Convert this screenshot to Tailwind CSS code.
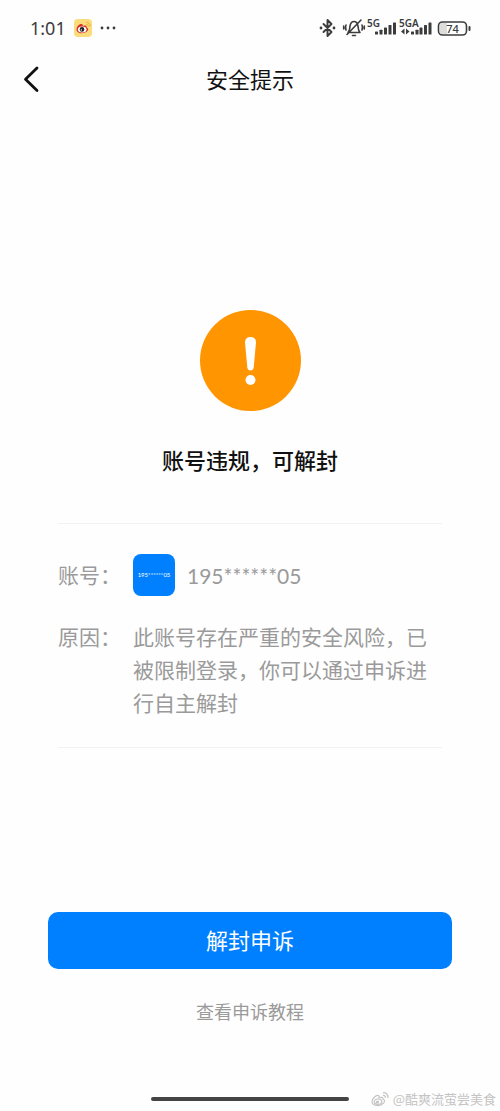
<!DOCTYPE html>
<html lang="zh-CN">
<head>
<meta charset="utf-8">
<meta name="viewport" content="width=device-width, initial-scale=1">
<title>安全提示</title>
<script src="https://cdn.jsdelivr.net/npm/@tailwindcss/browser@4"></script>
</head>
<body class="relative flex min-h-screen flex-col bg-[#fefefe] font-['Noto_Sans_CJK_SC',sans-serif] text-[#111111]">
  <div class="flex h-14 items-center justify-between pr-7 pl-[30px] text-[#3c3c3c]">
    <div class="flex items-center gap-2">
      <span class="font-['Noto_Sans',sans-serif] text-lg leading-6">1:01</span>
      <svg class="size-[18px]" viewBox="0 0 18 18" aria-hidden="true">
        <rect width="18" height="18" rx="4" fill="#fbdc7c"/>
        <path d="M2.500 10.500C2.500 7.500 5.500 4.500 8 5.200C9 5.400 9 6.400 8.800 6.900C11 6 13 6.500 12.700 8.400C14.300 9 14.500 10.300 13.800 11.400C11 15.500 2.500 15 2.500 10.500Z" fill="#d8342c"/>
        <ellipse cx="8.200" cy="10.500" rx="4.300" ry="2.900" fill="#fff"/>
        <circle cx="8" cy="10.400" r="2.300" fill="#222"/>
        <circle cx="7.300" cy="10.900" r=".7" fill="#fff"/>
        <path d="M12.200 5.300c1.400-.2 2.400.8 2.100 2.200M12 3.300c2.700-.4 4.500 1.700 4 4.300" fill="none" stroke="#f0b04a" stroke-width="1"/>
      </svg>
      <svg class="h-1 w-4" viewBox="0 0 16 4" fill="currentColor" aria-hidden="true"><circle cx="2" cy="2" r="1.400"/><circle cx="8" cy="2" r="1.400"/><circle cx="14" cy="2" r="1.400"/></svg>
    </div>
    <svg class="h-6 w-[153px]" viewBox="0 0 153 24" fill="none" stroke="currentColor" stroke-linecap="round" stroke-linejoin="round" role="img" aria-label="蓝牙 静音 5G 5GA 74">
      <path d="M4.500 8l8 8-4 4V4l4 4-8 8" stroke-width="1.900"/>
      <circle cx="2" cy="12" r="1.400" fill="currentColor" stroke="none"/><circle cx="15" cy="12" r="1.400" fill="currentColor" stroke="none"/>
      <path d="M29 16.500h12c-2-2-1.500-4-2-6.500-.6-3-2-4.500-4-4.500s-3.500 1.500-4 4.500-.1 4.500-2 6.500ZM33.500 19.500h3M42 4L28 18.500M27 9c-.6 1.500-.6 3.500 0 5M24.700 10v3M43 9c.6 1.500.6 3.500 0 5M45.300 10v3" stroke-width="1.600"/>
      <g fill="currentColor" stroke="none">
        <rect x="56" y="15.500" width="3" height="3" rx=".6"/><rect x="60.500" y="13.700" width="3" height="4.800" rx=".6"/><rect x="65" y="11.500" width="3" height="7" rx=".6"/><rect x="69.500" y="9" width="3" height="9.500" rx=".6"/><rect x="74" y="6.500" width="3" height="12" rx=".6"/>
        <path d="M85.500 12.500v6l-3.500-3ZM87 12.500v6l3.500-3Z"/>
        <rect x="92" y="15.500" width="3" height="3" rx=".6"/><rect x="96.500" y="13.700" width="3" height="4.800" rx=".6"/><rect x="100.500" y="11.500" width="3" height="7" rx=".6"/><rect x="105" y="9" width="3" height="9.500" rx=".6"/><rect x="109.500" y="6.500" width="3" height="12" rx=".6"/>
        <g class="font-['Noto_Sans',sans-serif] font-semibold"><text x="48" y="10.500" font-size="10">5G</text><text x="80" y="10.500" font-size="10">5GA</text></g>
      </g>
      <path d="M123 7h5v11h-5q-2 0-2-2V9q0-2 2-2Z" fill="#dddddd" stroke="none"/>
      <rect x="119.500" y="6" width="28" height="13" rx="4" stroke-width="1.600"/>
      <path d="M150.500 11v3" stroke-width="2"/>
      <text x="133.500" y="16.500" font-size="11" text-anchor="middle" fill="currentColor" stroke="none" class="font-['Noto_Sans',sans-serif] font-medium">74</text>
    </svg>
  </div>

  <header class="grid h-12 grid-cols-[1fr_auto_1fr] items-center px-[22px]">
    <button type="button" aria-label="返回" class="flex size-9 items-center justify-start">
      <svg class="h-7 w-5" viewBox="0 0 20 28" fill="none" stroke="#111" stroke-width="2.800" stroke-linecap="round" stroke-linejoin="round"><path d="M15 2L3.500 13.200L15 24.500"/></svg>
    </button>
    <h1 class="pb-1 text-[22px] leading-8">安全提示</h1>
  </header>

  <main class="flex grow flex-col items-stretch px-12 pt-[206px]">
    <svg class="size-[101px] self-center" viewBox="0 0 101 101" aria-hidden="true">
      <circle cx="50.500" cy="50.500" r="50.500" fill="#ff9500"/>
      <path d="M45 32.500Q45 27 50.500 27T56 32.500L53.700 57.500Q53.200 60.500 50.500 60.500T47.300 57.500Z" fill="#fff"/>
      <circle cx="50.500" cy="70" r="5" fill="#fff"/>
    </svg>
    <h2 class="mt-8 text-center text-[22px] leading-8 font-medium">账号违规，可解封</h2>

    <dl class="mx-2.5 mt-12 grid grid-cols-[75px_1fr] gap-y-6 border-y border-[#f2f2f2] pt-[30px] pb-7 text-[21px] leading-[33px] text-[#9a9a9a]">
      <dt class="pt-1">账号：</dt>
      <dd class="flex items-center gap-3">
        <span class="flex size-[42px] items-center justify-center rounded-lg bg-[#0080ff] font-['Lato',sans-serif] text-[6px] leading-none text-white">195******05</span>
        <span class="font-['Lato',sans-serif] text-[21px]">195******05</span>
      </dd>
      <dt>原因：</dt>
      <dd>此账号存在严重的安全风险，已被限制登录，你可以通过申诉进行自主解封</dd>
    </dl>

    <button type="button" class="mt-[164px] h-[57px] rounded-[10px] bg-[#0080ff] pb-1 text-[22px] leading-8 text-white">解封申诉</button>
    <a href="#" class="mt-7 self-center text-lg leading-7 text-[#9a9a9a]">查看申诉教程</a>
  </main>

  <footer class="flex h-6 items-end justify-center pb-2.5">
    <div class="h-1 w-[198px] rounded-full bg-[#444444]"></div>
  </footer>
  <div class="absolute right-1 bottom-0.5 flex items-center gap-1 text-[13px] leading-5 text-[#c4c4c4]">
    <svg class="h-4 w-[18px]" viewBox="0 0 18 16" fill="none" stroke="currentColor" stroke-width="1.200" aria-hidden="true">
      <path d="M1 10.500C1 7.500 5 4 7.300 4.500C8.500 4.800 8.300 6 8 6.800C10 6 12.300 6 12 8.300C14 9 14 10.500 12.500 12.200C9 16 1 15 1 10.500Z"/>
      <ellipse cx="7" cy="10.700" rx="3.700" ry="2.700"/><circle cx="6.500" cy="11" r="1" fill="currentColor"/>
      <path d="M12 4.500c1.500-.3 2.700.8 2.300 2.400M12 1.800c3-.6 5.500 2 4.800 5.200"/>
    </svg>
    <span>@酷爽流萤尝美食</span>
  </div>
</body>
</html>
